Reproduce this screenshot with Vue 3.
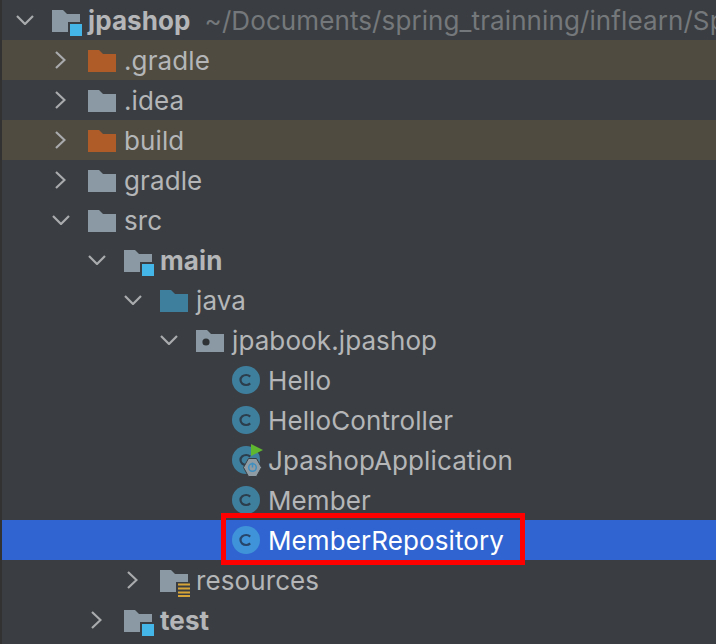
<template>
  <div class="tree">
    <div
      v-for="(row, i) in rows"
      :key="i"
      :class="['row', { excluded: row.icon === 'excluded', selected: row.selected }]"
      :style="{ paddingLeft: 14 + row.level * 36 + 'px' }"
    >
      <span class="arrow">
        <svg v-if="row.arrow === 'down'" width="18" height="10" viewBox="0 0 18 10">
          <path d="M1 1 L9 9 L17 1" />
        </svg>
        <svg v-else-if="row.arrow === 'right'" class="arrow-right" width="11" height="18" viewBox="0 0 11 18">
          <path d="M1 1 L9.5 9 L1 17" />
        </svg>
      </span>

      <span :class="['node', { boxed: row.selected }]">
        <span class="icon">
          <svg v-if="row.icon === 'class' || row.icon === 'spring'" width="28" height="28" viewBox="0 0 28 28">
            <circle cx="14" cy="14" r="14" :fill="row.selected ? '#3f93d8' : '#3f7f9e'" />
            <path
              d="M18.2 10.6 A5.6 5 0 1 0 18.2 17.4"
              fill="none"
              :stroke="row.selected ? '#27456b' : '#2c3e4c'"
              stroke-width="2.2"
            />
          </svg>
          <svg v-else class="folder" width="32" height="32" viewBox="0 0 32 32">
            <path :fill="folderColor(row.icon)" d="M0 2 H11 L15 6 H28 V24 H0 Z" />
            <circle v-if="row.icon === 'package'" cx="10" cy="14" r="3.6" fill="#2f3336" />
            <template v-if="row.icon === 'module'">
              <rect x="16" y="14" width="16" height="16" fill="#3a3e42" />
              <rect x="18" y="16" width="12" height="12" fill="#44b6e8" />
            </template>
            <template v-if="row.icon === 'resources'">
              <rect x="16" y="14" width="16" height="16" fill="#3a3e42" />
              <path d="M18 16.5 H30 M18 20.5 H30 M18 24.5 H30 M18 28 H30" stroke="#d6a437" stroke-width="2" />
            </template>
          </svg>
          <svg v-if="row.icon === 'spring'" class="overlay" width="34" height="40" viewBox="0 0 34 40">
            <path d="M19 6 L31 12 L19 18 Z" fill="#5fb62f" />
            <path d="M16.5 20.5 H24.5 L29.5 29.5 L24.5 38.5 H16.5 L11.5 29.5 Z" fill="#8f9ca4" stroke="#3a3e42" stroke-width="1" stroke-linejoin="round" />
            <circle cx="20.5" cy="29.5" r="3.8" fill="none" stroke="#3f8fc0" stroke-width="1.5" />
            <path d="M20.5 24.5 V29.5" stroke="#3f8fc0" stroke-width="1.5" />
          </svg>
        </span>
        <span :class="['label', { bold: row.bold }]">{{ row.label }}</span>
        <span v-if="row.path" class="path">{{ row.path }}</span>
      </span>
    </div>
  </div>
</template>

<script setup>
const rows = [
  { level: 0, arrow: 'down', icon: 'module', label: 'jpashop', bold: true, path: '~/Documents/spring_trainning/inflearn/Spring-boot' },
  { level: 1, arrow: 'right', icon: 'excluded', label: '.gradle' },
  { level: 1, arrow: 'right', icon: 'folder', label: '.idea' },
  { level: 1, arrow: 'right', icon: 'excluded', label: 'build' },
  { level: 1, arrow: 'right', icon: 'folder', label: 'gradle' },
  { level: 1, arrow: 'down', icon: 'folder', label: 'src' },
  { level: 2, arrow: 'down', icon: 'module', label: 'main', bold: true },
  { level: 3, arrow: 'down', icon: 'source', label: 'java' },
  { level: 4, arrow: 'down', icon: 'package', label: 'jpabook.jpashop' },
  { level: 5, icon: 'class', label: 'Hello' },
  { level: 5, icon: 'class', label: 'HelloController' },
  { level: 5, icon: 'spring', label: 'JpashopApplication' },
  { level: 5, icon: 'class', label: 'Member' },
  { level: 5, icon: 'class', label: 'MemberRepository', selected: true },
  { level: 3, arrow: 'right', icon: 'resources', label: 'resources' },
  { level: 2, arrow: 'right', icon: 'module', label: 'test', bold: true }
]

const folderColor = (icon) => {
  if (icon === 'excluded') return '#b05c28'
  if (icon === 'source') return '#3f7f9e'
  return '#8a99a3'
}
</script>

<style>
html, body {
  margin: 0;
  background: #3a3e42;
}
</style>

<style scoped>
.tree {
  width: 714px;
  height: 644px;
  overflow: hidden;
  border-left: 2px solid #323232;
  background: #3a3e42;
  font-family: Inter, "Liberation Sans", sans-serif;
  font-size: 26px;
  letter-spacing: 0.1px;
  color: #b4b6b8;
}

.row {
  display: flex;
  align-items: center;
  height: 40px;
  white-space: nowrap;
}

.row.excluded {
  background: #4f4b41;
}

.row.selected {
  background: #3064d0;
  color: #fff;
}

.arrow {
  flex: none;
  display: flex;
  align-items: center;
  width: 36px;
  height: 40px;
}

.arrow svg {
  fill: none;
  stroke: #a9abad;
  stroke-width: 2.2;
}

.arrow-right {
  margin-left: 3px;
}

.node {
  position: relative;
  display: flex;
  align-items: center;
  height: 40px;
}

/* red annotation drawn over the selected row */
.node.boxed::after {
  content: "";
  position: absolute;
  left: -11px;
  right: -21px;
  top: -7px;
  bottom: -5px;
  border: 5px solid #ff0000;
}

.icon {
  position: relative;
  flex: none;
  display: flex;
  align-items: center;
  width: 28px;
  height: 28px;
  margin-right: 8px;
}

.folder {
  flex: none;
  margin-top: 8px;
}

.overlay {
  position: absolute;
  left: 0;
  top: -8px;
}

.label {
  padding-top: 1px;
}

.bold {
  font-weight: 700;
}

.path {
  margin-left: 14px;
  padding-top: 1px;
  color: #75787b;
}
</style>
